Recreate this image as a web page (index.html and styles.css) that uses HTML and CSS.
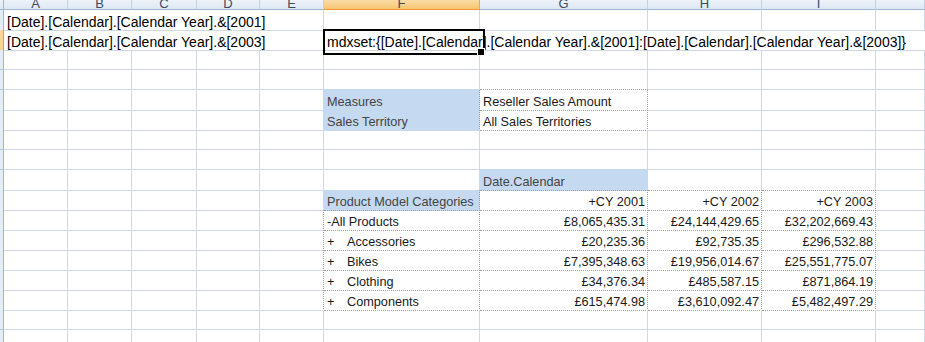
FILE: index.html
```html
<!DOCTYPE html>
<html lang="en">
<head>
    <meta charset="UTF-8">
    <title>Sheet1</title>
    <link rel="stylesheet" href="styles.css">
</head>
<body>
    <div class="sheet">
        <!-- column headers (top half is cut off) -->
        <div class="row head">
            <div class="rh"></div>
            <div class="ch"><span>A</span></div>
            <div class="ch"><span>B</span></div>
            <div class="ch"><span>C</span></div>
            <div class="ch"><span>D</span></div>
            <div class="ch"><span>E</span></div>
            <div class="ch active"><span>F</span></div>
            <div class="ch"><span>G</span></div>
            <div class="ch"><span>H</span></div>
            <div class="ch"><span>I</span></div>
            <div class="ch"></div>
        </div>

        <!-- 1 -->
        <div class="row">
            <div class="rh"></div>
            <div class="c span5 txt">[Date].[Calendar].[Calendar Year].&amp;[2001]</div>
            <div class="c"></div><div class="c"></div><div class="c"></div><div class="c"></div><div class="c"></div>
        </div>

        <!-- 2 -->
        <div class="row">
            <div class="rh active"></div>
            <div class="c span5 txt">[Date].[Calendar].[Calendar Year].&amp;[2003]</div>
            <div class="c span5 txt selected">mdxset:{[Date].[Calendar].[Calendar Year].&amp;[2001]:[Date].[Calendar].[Calendar Year].&amp;[2003]}</div>
        </div>

        <!-- 3 -->
        <div class="row">
            <div class="rh"></div>
            <div class="c"></div><div class="c"></div><div class="c"></div><div class="c"></div><div class="c"></div>
            <div class="c"></div><div class="c"></div><div class="c"></div><div class="c"></div><div class="c"></div>
        </div>

        <!-- 4 -->
        <div class="row">
            <div class="rh"></div>
            <div class="c"></div><div class="c"></div><div class="c"></div><div class="c"></div><div class="c"></div>
            <div class="c b-blue"></div><div class="c b-dot"></div><div class="c"></div><div class="c"></div><div class="c"></div>
        </div>

        <!-- 5 -->
        <div class="row">
            <div class="rh"></div>
            <div class="c"></div><div class="c"></div><div class="c"></div><div class="c"></div><div class="c r-blue"></div>
            <div class="c fill label r-dot">Measures</div>
            <div class="c pv r-dot b-dot">Reseller Sales Amount</div>
            <div class="c"></div><div class="c"></div><div class="c"></div>
        </div>

        <!-- 6 -->
        <div class="row">
            <div class="rh"></div>
            <div class="c"></div><div class="c"></div><div class="c"></div><div class="c"></div><div class="c r-blue"></div>
            <div class="c fill label r-dot">Sales Territory</div>
            <div class="c pv r-dot b-dot">All Sales Territories</div>
            <div class="c"></div><div class="c"></div><div class="c"></div>
        </div>

        <!-- 7 -->
        <div class="row">
            <div class="rh"></div>
            <div class="c"></div><div class="c"></div><div class="c"></div><div class="c"></div><div class="c"></div>
            <div class="c"></div><div class="c"></div><div class="c"></div><div class="c"></div><div class="c"></div>
        </div>

        <!-- 8 -->
        <div class="row">
            <div class="rh"></div>
            <div class="c"></div><div class="c"></div><div class="c"></div><div class="c"></div><div class="c"></div>
            <div class="c"></div><div class="c b-blue"></div><div class="c"></div><div class="c"></div><div class="c"></div>
        </div>

        <!-- 9 -->
        <div class="row">
            <div class="rh"></div>
            <div class="c"></div><div class="c"></div><div class="c"></div><div class="c"></div><div class="c"></div>
            <div class="c r-blue b-blue"></div>
            <div class="c fill label b-dot">Date.Calendar</div>
            <div class="c b-dot"></div><div class="c b-dot"></div><div class="c"></div>
        </div>

        <!-- 10 -->
        <div class="row">
            <div class="rh"></div>
            <div class="c"></div><div class="c"></div><div class="c"></div><div class="c"></div><div class="c r-blue"></div>
            <div class="c fill label r-dot b-dot">Product Model Categories</div>
            <div class="c pv num r-dot b-dot">+CY 2001</div>
            <div class="c pv num r-dot b-dot">+CY 2002</div>
            <div class="c pv num r-dot b-dot">+CY 2003</div>
            <div class="c"></div>
        </div>

        <!-- 11 -->
        <div class="row">
            <div class="rh"></div>
            <div class="c"></div><div class="c"></div><div class="c"></div><div class="c"></div><div class="c r-dot"></div>
            <div class="c pv r-dot b-dot">-All Products</div>
            <div class="c pv num r-dot b-dot">£8,065,435.31</div>
            <div class="c pv num r-dot b-dot">£24,144,429.65</div>
            <div class="c pv num r-dot b-dot">£32,202,669.43</div>
            <div class="c"></div>
        </div>

        <!-- 12 -->
        <div class="row">
            <div class="rh"></div>
            <div class="c"></div><div class="c"></div><div class="c"></div><div class="c"></div><div class="c r-dot"></div>
            <div class="c pv r-dot b-dot"><span class="plus">+</span>Accessories</div>
            <div class="c pv num r-dot b-dot">£20,235.36</div>
            <div class="c pv num r-dot b-dot">£92,735.35</div>
            <div class="c pv num r-dot b-dot">£296,532.88</div>
            <div class="c"></div>
        </div>

        <!-- 13 -->
        <div class="row">
            <div class="rh"></div>
            <div class="c"></div><div class="c"></div><div class="c"></div><div class="c"></div><div class="c r-dot"></div>
            <div class="c pv r-dot b-dot"><span class="plus">+</span>Bikes</div>
            <div class="c pv num r-dot b-dot">£7,395,348.63</div>
            <div class="c pv num r-dot b-dot">£19,956,014.67</div>
            <div class="c pv num r-dot b-dot">£25,551,775.07</div>
            <div class="c"></div>
        </div>

        <!-- 14 -->
        <div class="row">
            <div class="rh"></div>
            <div class="c"></div><div class="c"></div><div class="c"></div><div class="c"></div><div class="c r-dot"></div>
            <div class="c pv r-dot b-dot"><span class="plus">+</span>Clothing</div>
            <div class="c pv num r-dot b-dot">£34,376.34</div>
            <div class="c pv num r-dot b-dot">£485,587.15</div>
            <div class="c pv num r-dot b-dot">£871,864.19</div>
            <div class="c"></div>
        </div>

        <!-- 15 -->
        <div class="row">
            <div class="rh"></div>
            <div class="c"></div><div class="c"></div><div class="c"></div><div class="c"></div><div class="c r-dot"></div>
            <div class="c pv r-dot b-dot"><span class="plus">+</span>Components</div>
            <div class="c pv num r-dot b-dot">£615,474.98</div>
            <div class="c pv num r-dot b-dot">£3,610,092.47</div>
            <div class="c pv num r-dot b-dot">£5,482,497.29</div>
            <div class="c"></div>
        </div>

        <!-- 16 -->
        <div class="row">
            <div class="rh"></div>
            <div class="c"></div><div class="c"></div><div class="c"></div><div class="c"></div><div class="c"></div>
            <div class="c"></div><div class="c"></div><div class="c"></div><div class="c"></div><div class="c"></div>
        </div>

        <!-- 17 -->
        <div class="row">
            <div class="rh"></div>
            <div class="c"></div><div class="c"></div><div class="c"></div><div class="c"></div><div class="c"></div>
            <div class="c"></div><div class="c"></div><div class="c"></div><div class="c"></div><div class="c"></div>
        </div>
    </div>
</body>
</html>
```

FILE: styles.css
```css
* {
    box-sizing: border-box;
    margin: 0;
    padding: 0;
}

body {
    background-color: #ffffff;
    width: 925px;
    height: 342px;
    overflow: hidden;
    font-family: "Liberation Sans", Arial, sans-serif;
}

.row {
    display: grid;
    grid-template-columns: 4px 64px 64px 65px 63px 64px 156px 168px 114px 114px 1fr;
    height: 20px;
}

/* column header strip */
.row.head {
    height: 10px;
}

.ch {
    background: linear-gradient(#eef3fa, #dee7f3);
    border-right: 1px solid #c4d2e3;
    border-bottom: 1px solid #9eb6ce;
    overflow: hidden;
    display: flex;
    justify-content: center;
    align-items: flex-end;
}

.ch span {
    font-size: 13px;
    line-height: 20px;
    color: #3b4b62;
    margin-bottom: -5px;
}

.ch.active {
    background: linear-gradient(#f9dca6, #f6c570);
    border-right-color: #f2a94d;
    border-bottom-color: #f29536;
}

/* row header strip (only its edge is visible) */
.rh {
    background-color: #e4ecf7;
    border-right: 1px solid #9eb6ce;
    border-bottom: 1px solid #b8c9dc;
}

.head .rh {
    background: linear-gradient(#eef3fa, #dee7f3);
    border-bottom-color: #9eb6ce;
}

.rh.active {
    background-color: #f8d594;
    border-right-color: #f29536;
    border-bottom-color: #f29536;
}

/* cells: text sits low in the row, as in Excel */
.c {
    border-right: 1px solid #d0d7e5;
    border-bottom: 1px solid #d0d7e5;
    padding: 4px 3px 0;
    line-height: 16px;
    white-space: nowrap;
    font-size: 12.7px;
    color: #1a1a1a;
}

.span5 {
    grid-column: span 5;
}

.txt {
    font-size: 14px;
    color: #000000;
    overflow: visible;
}

.selected {
    position: relative;
    border-right: 0;
}

.selected::before {
    content: "";
    position: absolute;
    left: -1px;
    top: -1px;
    width: 158px;
    height: 22px;
    border: 2px solid #000000;
}

.selected::after {
    content: "";
    position: absolute;
    left: 153px;
    top: 18px;
    width: 6px;
    height: 6px;
    background-color: #000000;
    border: 1px solid #ffffff;
}

/* pivot table */
.fill {
    background-color: #c5d9f1;
    border-right-color: #c5d9f1;
    border-bottom-color: #c5d9f1;
}

.label {
    color: #444444;
}

.pv {
    color: #1a1a1a;
}

.num {
    text-align: right;
    padding-right: 2px;
}

.plus {
    display: inline-block;
    width: 20px;
}

.r-dot {
    border-right: 1px dotted #a0a0a0;
}

.b-dot {
    border-bottom: 1px dotted #a0a0a0;
}

.r-blue {
    border-right-color: #c5d9f1;
}

.b-blue {
    border-bottom-color: #c5d9f1;
}
```
